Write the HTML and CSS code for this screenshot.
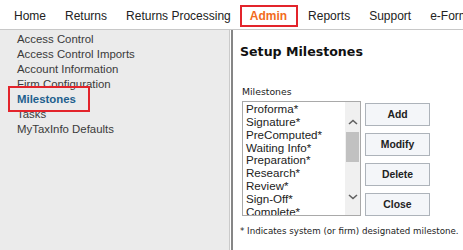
FILE: index.html
```html
<!DOCTYPE html>
<html>
  <head>
    <meta charset="utf-8">
    <title>Setup Milestones</title>
    <link rel="stylesheet" href="styles.css">
  </head>
  <body>
    <div class="nav">
      <div class="tab">Home</div>
      <div class="tab">Returns</div>
      <div class="tab">Returns Processing</div>
      <div class="tab sel">Admin</div>
      <div class="tab">Reports</div>
      <div class="tab">Support</div>
      <div class="tab">e-Form</div>
    </div>
    <div class="main">
      <div class="side">
        <div class="lnk">Access Control</div>
        <div class="lnk">Access Control Imports</div>
        <div class="lnk">Account Information</div>
        <div class="lnk">Firm Configuration</div>
        <div class="lnk cur">Milestones</div>
        <div class="lnk">Tasks</div>
        <div class="lnk">MyTaxInfo Defaults</div>
      </div>
      <div class="content">
        <div class="ttl">Setup Milestones</div>
        <div class="lbl">Milestones</div>
        <div class="row">
          <div class="list">
            <div class="items">
              <div class="itm">Proforma*</div>
              <div class="itm">Signature*</div>
              <div class="itm">PreComputed*</div>
              <div class="itm">Waiting Info*</div>
              <div class="itm">Preparation*</div>
              <div class="itm">Research*</div>
              <div class="itm">Review*</div>
              <div class="itm">Sign-Off*</div>
              <div class="itm">Complete*</div>
            </div>
            <div class="scr">
              <div class="arr up">
                <svg width="10" height="6" viewBox="0 0 10 6"><path d="M1 5 L5 1.5 L9 5" fill="none" stroke="#606060" stroke-width="1.6"/></svg>
              </div>
              <div class="thumb"></div>
              <div class="arr dn">
                <svg width="10" height="6" viewBox="0 0 10 6"><path d="M1 1 L5 4.5 L9 1" fill="none" stroke="#606060" stroke-width="1.6"/></svg>
              </div>
            </div>
          </div>
          <div class="btns">
            <div class="btn">Add</div>
            <div class="btn">Modify</div>
            <div class="btn">Delete</div>
            <div class="btn">Close</div>
          </div>
        </div>
        <div class="note">* Indicates system (or firm) designated milestone.</div>
      </div>
    </div>
  </body>
</html>
```
FILE: styles.css
```css
body {
  margin: 0;
  font-family: "Liberation Sans", Arial, sans-serif;
  color: #222222;
  overflow: hidden;
}
.nav {
  display: flex;
  height: 30px;
  box-sizing: border-box;
  padding: 5px 0 0 4px;
  border-bottom: 1px solid #c8c8c8;
  background: #ffffff;
  white-space: nowrap;
  overflow: hidden;
}
.tab {
  font-size: 12px;
  line-height: 18px;
  padding: 0 7px 0 8px;
  border: 2px solid transparent;
  height: 18px;
}
.tab.sel {
  border-color: #e3242b;
  color: #f26b21;
  font-weight: bold;
  padding: 0 9px 0 8px;
}
.main {
  display: flex;
  height: 220px;
}
.side {
  width: 230px;
  background: #ebebeb;
  border-right: 1px solid #cacaca;
  padding: 2px 0 0 17px;
  box-sizing: border-box;
}
.lnk {
  font-size: 11.4px;
  line-height: 15px;
  color: #3a3a3a;
}
.lnk.cur {
  font-weight: bold;
  color: #1e5f8e;
  outline: 2px solid #e3242b;
  margin-left: -7px;
  padding: 4px 0 3px 7px;
  width: 71px;
  margin-top: -4px;
  margin-bottom: -3px;
}
.content {
  flex: 1;
  margin-left: 1px;
  border-left: 2px solid #868686;
  padding: 0 0 0 7px;
  font-family: "DejaVu Sans", Verdana, sans-serif;
}
.ttl {
  font-weight: bold;
  font-size: 12.6px;
  line-height: 16px;
  margin-top: 14px;
  color: #111111;
}
.lbl {
  font-size: 9.3px;
  line-height: 12px;
  margin: 26px 0 3px 2px;
  color: #222222;
}
.row {
  display: flex;
  margin: 0 0 0 2px;
}
.list {
  display: flex;
  width: 119px;
  height: 115px;
  box-sizing: border-box;
  border: 1px solid #a9a9a9;
  background: #ffffff;
  overflow: hidden;
}
.items {
  flex: 1;
  padding: 1px 0 0 3px;
  font-family: "Liberation Sans", Arial, sans-serif;
  font-size: 11.6px;
  line-height: 12.85px;
  color: #222222;
}
.scr {
  width: 15px;
  display: flex;
  flex-direction: column;
  background: #f0f0f0;
}
.arr {
  display: flex;
  align-items: center;
  justify-content: center;
}
.arr.up {
  height: 30px;
  padding-top: 9px;
  box-sizing: border-box;
}
.arr.dn {
  height: 29px;
  padding-bottom: 8px;
  box-sizing: border-box;
  margin-top: auto;
}
.thumb {
  height: 30px;
  margin: 0 1px 0 1px;
  background: #c1c1c1;
}
.btns {
  display: flex;
  flex-direction: column;
  gap: 7px;
  margin: 2px 0 0 4px;
}
.btn {
  width: 65px;
  height: 23px;
  box-sizing: border-box;
  border: 1px solid #adb3ba;
  background: #f4f6f9;
  font-family: "Liberation Sans", Arial, sans-serif;
  font-weight: bold;
  font-size: 10.4px;
  line-height: 21px;
  text-align: center;
  color: #222222;
}
.note {
  font-size: 8.7px;
  line-height: 11px;
  margin-top: 10px;
  color: #222222;
  white-space: nowrap;
}
```
